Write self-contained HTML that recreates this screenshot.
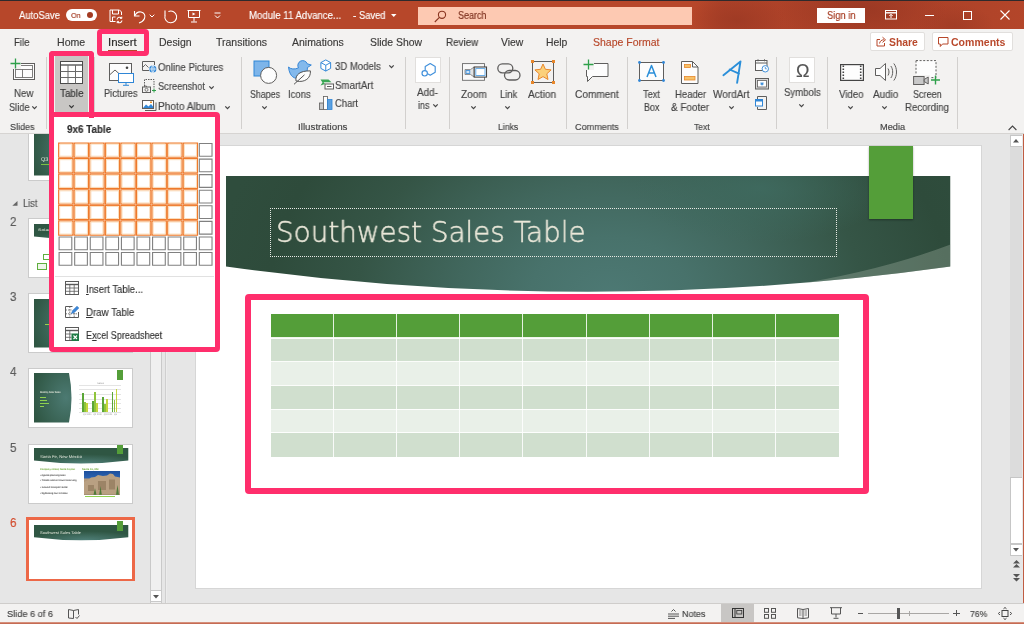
<!DOCTYPE html>
<html><head><meta charset="utf-8"><title>PowerPoint - Insert Table</title>
<style>
html,body{margin:0;padding:0}
body{width:1024px;height:624px;position:relative;overflow:hidden;background:#e6e6e6;font-family:"Liberation Sans",sans-serif;}
.t{position:absolute;white-space:nowrap;line-height:1;transform-origin:0 0;display:block;will-change:transform;-webkit-text-stroke:.15px}
.a{position:absolute}
svg{position:absolute;overflow:visible}
.sep{position:absolute;width:1px;background:#d2d0ce;top:57px;height:72px}
.pk{position:absolute;border:5.8px solid #ff2e6c;border-radius:4px;box-sizing:border-box}
</style></head>
<body>
<div class="a" style="left:150px;top:133.500px;width:12px;height:470px;background:#f0f0f0;border-left:1px solid #c9c9c9;border-right:1px solid #c9c9c9;box-sizing:border-box"></div>
<div class="a" style="left:150px;top:590px;width:12px;height:12px;background:#fff;border:1px solid #c9c9c9;box-sizing:border-box"></div>
<svg style="left:153px;top:594.500px" width="6" height="4" viewBox="0 0 6 4"><path d="M0 0h6L3 3.500z" fill="#555"/></svg>
<div class="a" style="left:165.200px;top:133.500px;width:1px;height:470px;background:#cfcfcf"></div>
<div class="a" style="left:166.200px;top:133.500px;width:1px;height:470px;background:#ececec"></div>
<span class="t" style="left:10.00px;top:119.00px;font-size:12px;color:#5a5a5a;transform:scaleX(0.9570);">1</span>
<div class="a" style="left:28.300px;top:120.7px;width:105.200px;height:60px;background:#fff;border:1px solid #cbcbcb;box-sizing:border-box"></div>
<svg style="left:33.7px;top:126px" width="38" height="49.5" viewBox="0 0 38 49.5"><defs><radialGradient id="tp1" cx=".85" cy=".5" r=".9"><stop offset="0" stop-color="#4c7a72"/><stop offset="1" stop-color="#2f5643"/></radialGradient></defs><path d="M0 0H35Q40 24.75 35 49.5H0z" fill="url(#tp1)"/></svg>
<span class="t" style="left:40.50px;top:158.00px;font-size:5.5px;color:#e4e8dc;transform:scaleX(0.9532);text-rendering:geometricPrecision;-webkit-text-stroke:0;">Q3</span>
<div class="a" style="left:40.500px;top:164px;width:9px;height:.8px;background:#7bc043"></div>
<svg style="left:11.500px;top:200.500px" width="6" height="5" viewBox="0 0 6 5"><path d="M5.500 0v4.800H.3z" fill="#666"/></svg>
<span class="t" style="left:23.00px;top:199.00px;font-size:10.4px;color:#555;transform:scaleX(0.8966);">List</span>
<span class="t" style="left:10.00px;top:216.00px;font-size:12px;color:#5a5a5a;transform:scaleX(0.9570);">2</span>
<div class="a" style="left:28.300px;top:217.8px;width:105.200px;height:60px;background:#fff;border:1px solid #cbcbcb;box-sizing:border-box"></div>
<svg style="left:33.5px;top:223.5px" width="94.3" height="16.5" viewBox="0 0 94.3 16.5"><defs><radialGradient id="tb217" cx=".55" cy="1" r=".6" gradientTransform="scale(1 1)"><stop offset="0" stop-color="#4f7f78"/><stop offset="1" stop-color="#2f5643"/></radialGradient></defs><path d="M0 0H94.3V12.5Q47.15 18.5 0 12.5z" fill="url(#tb217)"/></svg>
<span class="t" style="left:38.00px;top:229.00px;font-size:3.5px;color:#e4e8dc;transform:scaleX(1.4685);text-rendering:geometricPrecision;-webkit-text-stroke:0;">Solar</span>
<div class="a" style="left:42.500px;top:253.500px;width:9px;height:6.500px;border:1px solid #5fae3e;background:#fff;box-sizing:border-box"></div>
<div class="a" style="left:37px;top:262.500px;width:10px;height:7px;border:1px solid #5fae3e;background:#eef6ea;box-sizing:border-box"></div>
<span class="t" style="left:10.00px;top:291.00px;font-size:12px;color:#5a5a5a;transform:scaleX(0.9570);">3</span>
<div class="a" style="left:28.300px;top:292.8px;width:105.200px;height:60px;background:#fff;border:1px solid #cbcbcb;box-sizing:border-box"></div>
<svg style="left:33.7px;top:298.5px" width="38" height="48.5" viewBox="0 0 38 48.5"><defs><radialGradient id="tp3" cx=".85" cy=".5" r=".9"><stop offset="0" stop-color="#4c7a72"/><stop offset="1" stop-color="#2f5643"/></radialGradient></defs><path d="M0 0H35Q40 24.25 35 48.5H0z" fill="url(#tp3)"/></svg>
<div class="a" style="left:45px;top:323.500px;width:5px;height:.8px;background:#9ad04c"></div>
<span class="t" style="left:10.00px;top:366.00px;font-size:12px;color:#5a5a5a;transform:scaleX(0.9570);">4</span>
<div class="a" style="left:28.300px;top:367.8px;width:105.200px;height:60px;background:#fff;border:1px solid #cbcbcb;box-sizing:border-box"></div>
<svg style="left:33.7px;top:373.3px" width="38" height="49.5" viewBox="0 0 38 49.5"><defs><radialGradient id="tp4" cx=".85" cy=".5" r=".9"><stop offset="0" stop-color="#4c7a72"/><stop offset="1" stop-color="#2f5643"/></radialGradient></defs><path d="M0 0H35Q40 24.75 35 49.5H0z" fill="url(#tp4)"/></svg>
<span class="t" style="left:39.70px;top:392.00px;font-size:2.6px;color:#e4e8dc;font-weight:700;transform:scaleX(0.8314);text-rendering:geometricPrecision;-webkit-text-stroke:0;">Monthly Solar Sales</span>
<div class="a" style="left:39.700px;top:396.8px;width:6px;height:.7px;background:#8fd14f"></div>
<div class="a" style="left:39.700px;top:399.8px;width:7.5px;height:.7px;background:#8fd14f"></div>
<div class="a" style="left:39.700px;top:402.6px;width:9.5px;height:.7px;background:#8fd14f"></div>
<div class="a" style="left:39.700px;top:405.6px;width:4px;height:.7px;background:#8fd14f"></div>
<div class="a" style="left:117.4px;top:369.5px;width:5.8px;height:10px;background:#549e39"></div>
<div class="a" style="left:79px;top:384.8px;width:41.500px;height:.5px;background:#e4e4e4"></div>
<div class="a" style="left:79px;top:389.40000000000003px;width:41.500px;height:.5px;background:#e4e4e4"></div>
<div class="a" style="left:79px;top:394.0px;width:41.500px;height:.5px;background:#e4e4e4"></div>
<div class="a" style="left:79px;top:398.6px;width:41.500px;height:.5px;background:#e4e4e4"></div>
<div class="a" style="left:79px;top:403.2px;width:41.500px;height:.5px;background:#e4e4e4"></div>
<div class="a" style="left:79px;top:407.8px;width:41.500px;height:.5px;background:#e4e4e4"></div>
<div class="a" style="left:79px;top:412.40000000000003px;width:41.500px;height:.5px;background:#e4e4e4"></div>
<span class="t" style="left:97.00px;top:383.00px;font-size:2.4px;color:#999;transform:scaleX(1.1697);text-rendering:geometricPrecision;-webkit-text-stroke:0;">Sales</span>
<div class="a" style="left:82px;top:392.5px;width:1.800px;height:19.5px;background:#5aa637"></div>
<div class="a" style="left:84px;top:401.5px;width:1.800px;height:10.5px;background:#8fc43c"></div>
<div class="a" style="left:85.8px;top:403.0px;width:1.800px;height:9px;background:#c4d63c"></div>
<div class="a" style="left:91.8px;top:400.5px;width:1.800px;height:11.5px;background:#5aa637"></div>
<div class="a" style="left:93.8px;top:391.5px;width:1.800px;height:20.5px;background:#8fc43c"></div>
<div class="a" style="left:95.8px;top:403.2px;width:1.800px;height:8.8px;background:#c4d63c"></div>
<div class="a" style="left:102px;top:396.5px;width:1.800px;height:15.5px;background:#5aa637"></div>
<div class="a" style="left:104px;top:404.0px;width:1.800px;height:8px;background:#8fc43c"></div>
<div class="a" style="left:105.8px;top:398.5px;width:1.800px;height:13.5px;background:#c4d63c"></div>
<div class="a" style="left:111.7px;top:391.5px;width:1.800px;height:20.5px;background:#5aa637"></div>
<div class="a" style="left:113.7px;top:400.2px;width:1.800px;height:11.8px;background:#8fc43c"></div>
<div class="a" style="left:115.6px;top:389.0px;width:1.800px;height:23px;background:#c4d63c"></div>
<span class="t" style="left:83.00px;top:414.00px;font-size:2.2px;color:#999;transform:scaleX(1.0126);text-rendering:geometricPrecision;-webkit-text-stroke:0;">Q1 2020 &nbsp; Q2 2020 &nbsp; Q3 2020 &nbsp; Q4</span>
<span class="t" style="left:10.00px;top:442.00px;font-size:12px;color:#5a5a5a;transform:scaleX(0.9570);">5</span>
<div class="a" style="left:28.300px;top:443.6px;width:105.200px;height:60px;background:#fff;border:1px solid #cbcbcb;box-sizing:border-box"></div>
<svg style="left:33.5px;top:448.40000000000003px" width="94.3" height="16.5" viewBox="0 0 94.3 16.5"><defs><radialGradient id="tb443" cx=".55" cy="1" r=".6" gradientTransform="scale(1 1)"><stop offset="0" stop-color="#4f7f78"/><stop offset="1" stop-color="#2f5643"/></radialGradient></defs><path d="M0 0H94.3V12.5Q47.15 18.5 0 12.5z" fill="url(#tb443)"/></svg>
<div class="a" style="left:117.4px;top:444.8px;width:5.8px;height:9.7px;background:#549e39"></div>
<span class="t" style="left:39.90px;top:455.00px;font-size:4px;color:#e4e8dc;transform:scaleX(1.0435);text-rendering:geometricPrecision;-webkit-text-stroke:0;">Santa Fe, New Mexico</span>
<span class="t" style="left:40.00px;top:469.00px;font-size:2.6px;color:#6aa632;font-weight:700;transform:scaleX(0.8992);text-rendering:geometricPrecision;-webkit-text-stroke:0;">Company retreat, Santa Fe plan</span>
<span class="t" style="left:40.00px;top:475.00px;font-size:2.6px;color:#444;font-weight:700;transform:scaleX(0.8518);text-rendering:geometricPrecision;-webkit-text-stroke:0;">• Agenda planning tasks</span>
<span class="t" style="left:40.00px;top:480.00px;font-size:2.6px;color:#444;font-weight:700;transform:scaleX(0.9172);text-rendering:geometricPrecision;-webkit-text-stroke:0;">• Tickets and air travel reserving</span>
<span class="t" style="left:40.00px;top:487.00px;font-size:2.6px;color:#444;font-weight:700;transform:scaleX(0.8902);text-rendering:geometricPrecision;-webkit-text-stroke:0;">• Ground transport rental</span>
<span class="t" style="left:40.00px;top:493.00px;font-size:2.6px;color:#444;font-weight:700;transform:scaleX(0.8107);text-rendering:geometricPrecision;-webkit-text-stroke:0;">• Sightseeing tour list ideas</span>
<span class="t" style="left:82.00px;top:469.00px;font-size:2.6px;color:#6aa632;font-weight:700;transform:scaleX(1.0125);text-rendering:geometricPrecision;-webkit-text-stroke:0;">Santa Fe, NM</span>
<div class="a" style="left:83.800px;top:471.3px;width:36.200px;height:23.800px;background:linear-gradient(180deg,#1d4f9c 0%,#2b62b0 28%,#b49a7c 34%,#a58a6c 62%,#8a7358 82%,#6b6a44 100%)"></div>
<svg style="left:83.800px;top:471.3px" width="36.200" height="23.800" viewBox="0 0 36.200 23.800"><path d="M0 11l4-2 3-2.500 4-.5 3-2 5 1 4-.5 3-2 3 .5 2 2.500 5 1V23.800H0z" fill="#b9a082"/><path d="M4 14h6v6H4zM14 10h8v9h-8zM25 8.500h6v10h-6z" fill="#9c8466"/><path d="M11 17l1.500 6.800h-3zM16.500 15l1.300 8.800h-2.600zM33.500 14l1.500 9.800h-3z" fill="#4f7a3a"/></svg>
<div class="a" style="left:84.500px;top:495.90000000000003px;width:30px;height:.7px;background:#8fd14f"></div>
<span class="t" style="left:10.00px;top:517.00px;font-size:12px;color:#d2492a;transform:scaleX(0.9570);">6</span>
<div class="a" style="left:26px;top:517.3000000000001px;width:109px;height:64px;background:#ed6847"></div>
<div class="a" style="left:28.700px;top:520.0px;width:103.600px;height:58.600px;background:#fff"></div>
<svg style="left:33.5px;top:524.6px" width="94.3" height="16.3" viewBox="0 0 94.3 16.3"><defs><radialGradient id="tb518" cx=".55" cy="1" r=".6" gradientTransform="scale(1 1)"><stop offset="0" stop-color="#4f7f78"/><stop offset="1" stop-color="#2f5643"/></radialGradient></defs><path d="M0 0H94.3V12.3Q47.15 18.3 0 12.3z" fill="url(#tb518)"/></svg>
<div class="a" style="left:117.3px;top:520.5px;width:5.8px;height:10px;background:#549e39"></div>
<span class="t" style="left:40.00px;top:532.00px;font-size:3.8px;color:#e4e8dc;transform:scaleX(1.0688);text-rendering:geometricPrecision;-webkit-text-stroke:0;">Southwest Sales Table</span>
<div class="a" style="left:195px;top:145px;width:787.200px;height:443.800px;background:#fff;border:1px solid #d6d6d6;box-sizing:border-box"></div>
<svg style="left:226px;top:176px" width="724.500" height="117" viewBox="0 0 724.500 117">
<defs>
<radialGradient id="bg1" gradientUnits="userSpaceOnUse" cx="384" cy="121" r="400" gradientTransform="translate(0 30.250) scale(1 .75)"><stop offset="0" stop-color="#4d7974"/><stop offset=".2" stop-color="#48726b"/><stop offset=".38" stop-color="#41675d"/><stop offset=".63" stop-color="#355546"/><stop offset=".85" stop-color="#2e4b3b"/><stop offset="1" stop-color="#2f4d3d"/></radialGradient>
<radialGradient id="bg2" gradientUnits="userSpaceOnUse" cx="534" cy="12" r="130" gradientTransform="translate(0 7) scale(1 .42)"><stop offset="0" stop-color="#3f6b60" stop-opacity=".85"/><stop offset="1" stop-color="#3f6b60" stop-opacity="0"/></radialGradient>
<clipPath id="bc"><path d="M0 0H724.500V90.500Q362 141 0 90.500z"/></clipPath>
</defs>
<g clip-path="url(#bc)">
<rect width="724.500" height="117" fill="url(#bg1)"/>
<rect width="724.500" height="117" fill="url(#bg2)"/>
<path d="M724.500 68.500Q655 95 560 110L724.500 117z" fill="#a9b8aa" fill-opacity=".33"/>
</g>
</svg>
<div class="a" style="left:868.500px;top:146px;width:44.300px;height:73.200px;background:#549e39;box-shadow:0 1px 2px rgba(0,0,0,.35)"></div>
<div class="a" style="left:269.500px;top:208px;width:567.500px;height:48.500px;border:1px dotted #e6eae4;box-sizing:border-box"></div>
<span class="t" style="left:276.00px;top:218.00px;font-size:28.8px;color:#ebe8da;font-weight:200;transform:scaleX(0.9651);font-family:'DejaVu Sans Light','DejaVu Sans','Liberation Sans',sans-serif;-webkit-text-stroke:.5px">Southwest Sales Table</span>
<div class="a" style="left:270.5px;top:314.00px;width:568.08px;height:23.75px;background:#549e39"></div>
<div class="a" style="left:270.5px;top:337.75px;width:568.08px;height:23.75px;background:#d0dfce"></div>
<div class="a" style="left:270.5px;top:361.50px;width:568.08px;height:23.75px;background:#e9f0e8"></div>
<div class="a" style="left:270.5px;top:385.25px;width:568.08px;height:23.75px;background:#d0dfce"></div>
<div class="a" style="left:270.5px;top:409.00px;width:568.08px;height:23.75px;background:#e9f0e8"></div>
<div class="a" style="left:270.5px;top:432.75px;width:568.08px;height:23.75px;background:#d0dfce"></div>
<div class="a" style="left:333.12px;top:314px;width:1px;height:142.5px;background:rgba(255,255,255,.85)"></div>
<div class="a" style="left:396.24px;top:314px;width:1px;height:142.5px;background:rgba(255,255,255,.85)"></div>
<div class="a" style="left:459.36px;top:314px;width:1px;height:142.5px;background:rgba(255,255,255,.85)"></div>
<div class="a" style="left:522.48px;top:314px;width:1px;height:142.5px;background:rgba(255,255,255,.85)"></div>
<div class="a" style="left:585.60px;top:314px;width:1px;height:142.5px;background:rgba(255,255,255,.85)"></div>
<div class="a" style="left:648.72px;top:314px;width:1px;height:142.5px;background:rgba(255,255,255,.85)"></div>
<div class="a" style="left:711.84px;top:314px;width:1px;height:142.5px;background:rgba(255,255,255,.85)"></div>
<div class="a" style="left:774.96px;top:314px;width:1px;height:142.5px;background:rgba(255,255,255,.85)"></div>
<div class="a" style="left:270.5px;top:337.25px;width:568.08px;height:1.6px;background:rgba(255,255,255,.9)"></div>
<div class="a" style="left:270.5px;top:361.00px;width:568.08px;height:1px;background:rgba(255,255,255,.9)"></div>
<div class="a" style="left:270.5px;top:384.75px;width:568.08px;height:1px;background:rgba(255,255,255,.9)"></div>
<div class="a" style="left:270.5px;top:408.50px;width:568.08px;height:1px;background:rgba(255,255,255,.9)"></div>
<div class="a" style="left:270.5px;top:432.25px;width:568.08px;height:1px;background:rgba(255,255,255,.9)"></div>
<div class="pk" style="left:244.500px;top:293.500px;width:624px;height:200.500px;border-width:6px"></div>
<div class="a" style="left:1010px;top:133.500px;width:12px;height:470px;background:#dcdcdc"></div>
<div class="a" style="left:1010px;top:134.500px;width:12.500px;height:12.500px;background:#fff;border:1px solid #c6c6c6;box-sizing:border-box"></div>
<svg style="left:1013.300px;top:139px" width="6" height="4" viewBox="0 0 6 4"><path d="M0 3.500h6L3 0z" fill="#555"/></svg>
<div class="a" style="left:1010px;top:477px;width:12.500px;height:66.500px;background:#fff;border:1px solid #c6c6c6;box-sizing:border-box"></div>
<div class="a" style="left:1010px;top:543.500px;width:12.500px;height:12px;background:#fff;border:1px solid #c6c6c6;box-sizing:border-box"></div>
<svg style="left:1013.300px;top:548px" width="6" height="4" viewBox="0 0 6 4"><path d="M0 0h6L3 3.500z" fill="#555"/></svg>
<div class="a" style="left:1010px;top:555.500px;width:12.500px;height:47px;background:#e6e6e6"></div>
<svg style="left:1012.800px;top:560px" width="7" height="8" viewBox="0 0 7 8"><path d="M0 3.500h7L3.500 0zM0 7.500h7L3.500 4z" fill="#555"/></svg>
<svg style="left:1012.800px;top:573.500px" width="7" height="8" viewBox="0 0 7 8"><path d="M0 0h7L3.500 3.500zM0 4h7L3.500 7.500z" fill="#555"/></svg>
<div class="a" style="left:1022px;top:133.500px;width:1px;height:470px;background:#e6e8e8"></div><div class="a" style="left:1023px;top:29px;width:1px;height:595px;background:#c05c42"></div>
<div class="a" style="left:0;top:0;width:1024px;height:29px;background:#b7472a"></div>
<div class="a" style="left:692px;top:0;width:332px;height:29px;background:radial-gradient(ellipse 48px 26px at 45px 20px,rgba(158,58,36,.9),rgba(158,58,36,0) 100%),radial-gradient(ellipse 85px 34px at 170px 10px,rgba(154,56,35,.95),rgba(154,56,35,0) 100%),radial-gradient(ellipse 40px 22px at 262px 26px,rgba(158,58,36,.7),rgba(158,58,36,0) 100%),linear-gradient(90deg,rgba(170,64,40,0),rgba(170,64,40,.75) 30px,rgba(170,64,40,.75) 250px,rgba(176,68,41,.5) 332px)"></div>
<div class="a" style="left:0;top:0;width:1024px;height:1px;background:#2e2a2c"></div>
<span class="t" style="left:18.80px;top:11.00px;font-size:10px;color:#ffffff;transform:scaleX(0.9452);">AutoSave</span>
<div class="a" style="left:65.5px;top:8.5px;width:31.5px;height:12.5px;border-radius:7px;background:#fff"></div>
<span class="t" style="left:70.60px;top:12.00px;font-size:8px;color:#a33a22;transform:scaleX(0.8902);">On</span>
<div class="a" style="left:87px;top:11.8px;width:6px;height:6px;border-radius:3px;background:#a33a22"></div>
<svg style="left:109px;top:9px" width="14" height="14" viewBox="0 0 14 14" fill="none" stroke="#fff" stroke-width="1"><path d="M6.5 12.5H1V1h9.5L12.5 3V6"/><path d="M3.5 1v4h6V1"/><path d="M3.5 12.5V8h3"/><path d="M8 10.5a2.6 2.6 0 0 1 4.6-1.3M13 11.5a2.6 2.6 0 0 1-4.6 1.3" stroke-width="1.1"/><path d="M12.8 7.6v1.8h-1.8M8.2 14.2v-1.8H10" stroke-width=".9"/></svg>
<svg style="left:132.5px;top:8.5px" width="15" height="15" viewBox="0 0 15 15" fill="none" stroke="#fff" stroke-width="1.1"><path d="M1.5 2v5h5"/><path d="M1.8 6.8C3 4 5.5 2.6 8 3c3 .5 4.800 3.500 3.500 6.500C10.600 11.500 8.500 13.300 6 14"/></svg>
<svg style="left:149px;top:14px" width="6" height="4" viewBox="0 0 6 4" fill="none" stroke="#fff" stroke-width="1"><path d="M.7.7l2.300 2.300L5.300.7"/></svg>
<svg style="left:163px;top:8.500px" width="15" height="15" viewBox="0 0 15 15" fill="none" stroke="#fff" stroke-width="1.100"><path d="M2 1.500V6.400"/><path d="M2.100 6.200A5.900 5.900 0 1 0 5.400 2.500" transform="rotate(0)"/></svg>
<svg style="left:187px;top:9px" width="14" height="14" viewBox="0 0 14 14" fill="none" stroke="#fff" stroke-width="1"><path d="M.5 1.500h13M1.500 1.500v7h11v-7M7 8.500v4M4 13h6"/><path d="M5.500 3.500v3l3-1.500z" fill="#fff" stroke="none"/></svg>
<svg style="left:214px;top:12px" width="7" height="7" viewBox="0 0 7 7" fill="none" stroke="#fff" stroke-width="1"><path d="M.5 1h6M1 3.500l2.500 2.500L6 3.500"/></svg>
<span class="t" style="left:249.40px;top:11.00px;font-size:10px;color:#ffffff;transform:scaleX(0.9640);">Module 11 Advance...</span>
<span class="t" style="left:352.50px;top:11.00px;font-size:10px;color:#ffffff;">-</span>
<span class="t" style="left:359.00px;top:11.00px;font-size:10px;color:#ffffff;transform:scaleX(0.9344);">Saved</span>
<svg style="left:390.500px;top:14px" width="6" height="4" viewBox="0 0 6 4"><path d="M0 0h5.500L2.750 3z" fill="#fff"/></svg>
<div class="a" style="left:418px;top:7px;width:274px;height:17.500px;background:#fdc9b2"></div>
<svg style="left:433.500px;top:9.500px" width="13" height="13" viewBox="0 0 13 13" fill="none" stroke="#8a3520" stroke-width="1.100"><circle cx="8" cy="4.800" r="3.600"/><path d="M5.400 7.400L.8 12"/></svg>
<span class="t" style="left:458.40px;top:11.00px;font-size:10px;color:#7c2f1d;transform:scaleX(0.8994);">Search</span>
<div class="a" style="left:817px;top:7.500px;width:47.500px;height:15px;background:#fff"></div>
<span class="t" style="left:826.50px;top:11.00px;font-size:10.4px;color:#a5391f;transform:scaleX(0.8968);">Sign in</span>
<svg style="left:885px;top:9.500px" width="12" height="10" viewBox="0 0 12 10" fill="none" stroke="#fff" stroke-width="1"><rect x=".5" y=".5" width="11" height="8.500"/><path d="M.5 2.800h11" stroke-width="1.400"/><path d="M6 8V4.500M4.300 6L6 4.300 7.700 6"/></svg>
<div class="a" style="left:924.500px;top:14.500px;width:9px;height:1px;background:#fff"></div>
<div class="a" style="left:962.500px;top:10.500px;width:7.500px;height:7.500px;border:1px solid #fff;box-sizing:content-box"></div>
<svg style="left:999.500px;top:10px" width="10" height="10" viewBox="0 0 10 10" stroke="#fff" stroke-width="1.100"><path d="M.5.5l9 9M9.500.5l-9 9"/></svg>
<div class="a" style="left:0;top:29px;width:1024px;height:103.5px;background:#f3f2f1"></div>
<div class="a" style="left:0;top:132.5px;width:1024px;height:1px;background:#d6d4d2"></div>
<span class="t" style="left:14.00px;top:38.00px;font-size:10.4px;color:#3b3a39;transform:scaleX(0.9254);">File</span>
<span class="t" style="left:56.60px;top:38.00px;font-size:10.4px;color:#3b3a39;transform:scaleX(1.0174);">Home</span>
<span class="t" style="left:108.00px;top:38.00px;font-size:10.4px;color:#2b2a29;transform:scaleX(1.1038);">Insert</span>
<span class="t" style="left:159.00px;top:38.00px;font-size:10.4px;color:#3b3a39;transform:scaleX(1.0074);">Design</span>
<span class="t" style="left:215.60px;top:38.00px;font-size:10.4px;color:#3b3a39;transform:scaleX(1.0112);">Transitions</span>
<span class="t" style="left:292.40px;top:38.00px;font-size:10.4px;color:#3b3a39;transform:scaleX(1.0077);">Animations</span>
<span class="t" style="left:370.00px;top:38.00px;font-size:10.4px;color:#3b3a39;">Slide Show</span>
<span class="t" style="left:445.50px;top:38.00px;font-size:10.4px;color:#3b3a39;transform:scaleX(0.9478);">Review</span>
<span class="t" style="left:500.90px;top:38.00px;font-size:10.4px;color:#3b3a39;">View</span>
<span class="t" style="left:546.30px;top:38.00px;font-size:10.4px;color:#3b3a39;">Help</span>
<span class="t" style="left:592.60px;top:38.00px;font-size:10.4px;color:#b7472a;transform:scaleX(1.0100);">Shape Format</span>
<div class="a" style="left:108px;top:49.500px;width:29px;height:1.600px;background:#b7472a"></div>
<div class="a" style="left:869.500px;top:32px;width:55px;height:19px;background:#fff;border:1px solid #e1dfdd;box-sizing:border-box;border-radius:2px"></div>
<svg style="left:875.500px;top:36px" width="11" height="11" viewBox="0 0 11 11" fill="none" stroke="#b7472a" stroke-width="1"><path d="M4 3.500H1v6.500h7.500V7"/><path d="M3.500 7.500C4 5 5.500 3.800 8 3.800M6.500 1.200L9.500 3.800 6.500 6.400"/></svg>
<span class="t" style="left:889.00px;top:38.00px;font-size:10.4px;color:#b9492c;font-weight:700;transform:scaleX(0.9865);-webkit-text-stroke:0;">Share</span>
<div class="a" style="left:931.500px;top:32px;width:81.500px;height:19px;background:#fff;border:1px solid #e1dfdd;box-sizing:border-box;border-radius:2px"></div>
<svg style="left:938px;top:36.500px" width="11" height="11" viewBox="0 0 11 11" fill="none" stroke="#b7472a" stroke-width="1"><path d="M.5.500h9.500v6.500H4.500L2.300 9.500V7H.5z"/></svg>
<span class="t" style="left:951.00px;top:38.00px;font-size:10.4px;color:#b9492c;font-weight:700;transform:scaleX(1.0148);-webkit-text-stroke:0;">Comments</span>
<div class="sep" style="left:46.4px"></div>
<div class="sep" style="left:94.3px"></div>
<div class="sep" style="left:240.8px"></div>
<div class="sep" style="left:405px"></div>
<div class="sep" style="left:449px"></div>
<div class="sep" style="left:565.5px"></div>
<div class="sep" style="left:627.2px"></div>
<div class="sep" style="left:775.5px"></div>
<div class="sep" style="left:827px"></div>
<div class="sep" style="left:956.8px"></div>
<span class="t" style="left:10.30px;top:123.00px;font-size:9.200000000000001px;color:#444444;transform:scaleX(0.9788);">Slides</span>
<span class="t" style="left:298.00px;top:123.00px;font-size:9.200000000000001px;color:#444444;transform:scaleX(1.0652);">Illustrations</span>
<span class="t" style="left:497.50px;top:123.00px;font-size:9.200000000000001px;color:#444444;transform:scaleX(0.9462);">Links</span>
<span class="t" style="left:574.60px;top:123.00px;font-size:9.200000000000001px;color:#444444;transform:scaleX(0.9860);">Comments</span>
<span class="t" style="left:693.60px;top:123.00px;font-size:9.200000000000001px;color:#444444;transform:scaleX(0.9312);">Text</span>
<span class="t" style="left:880.00px;top:123.00px;font-size:9.200000000000001px;color:#444444;transform:scaleX(1.0067);">Media</span>
<svg style="left:1008px;top:124.500px" width="9" height="6" viewBox="0 0 9 6" fill="none" stroke="#444" stroke-width="1.100"><path d="M.6 5l3.900-3.900L8.400 5"/></svg>
<svg style="left:10px;top:58px" width="26" height="23" viewBox="0 0 26 23" fill="none"><rect x="3.500" y="5.500" width="21" height="16" fill="#fdfdfd" stroke="#5f5e5d"/><rect x="5.500" y="7.500" width="17" height="12" stroke="#5f5e5d" stroke-width=".8"/><path d="M5.500 11.500h17M12.500 11.500v8" stroke="#5f5e5d" stroke-width=".8"/><rect x="0" y="0" width="11" height="11" fill="#f3f2f1"/><path d="M5.500.5v10M.5 5.500h10" stroke="#2ea04a" stroke-width="1.300"/></svg>
<span class="t" style="left:14.20px;top:89.00px;font-size:10.3px;color:#444444;transform:scaleX(0.9365);">New</span>
<span class="t" style="left:9.30px;top:103.00px;font-size:10.3px;color:#444444;transform:scaleX(0.8950);">Slide</span>
<svg style="left:32.0px;top:105.5px" width="5" height="3.500" viewBox="0 0 5 3.500" fill="none" stroke="#444" stroke-width="1.250"><path d="M.3.400l2.200 2.200L4.700.400"/></svg>
<div class="a" style="left:54.500px;top:56px;width:33px;height:55.500px;background:#c8c6c4"></div>
<svg style="left:60px;top:60.500px" width="23" height="23" viewBox="0 0 23 23" fill="none" stroke="#4a4a4a"><rect x=".5" y=".5" width="22" height="22" fill="#fff"/><path d="M.5 4h22" stroke-width="1.300"/><path d="M.5 10.500h22M.5 16.500h22M8 4v18.500M15.500 4v18.500" stroke="#6a6a6a" stroke-width="1"/></svg>
<span class="t" style="left:59.50px;top:89.00px;font-size:10.3px;color:#333;transform:scaleX(0.9543);">Table</span>
<svg style="left:68.5px;top:105.2px" width="5" height="3.500" viewBox="0 0 5 3.500" fill="none" stroke="#333" stroke-width="1.250"><path d="M.3.400l2.200 2.200L4.700.400"/></svg>
<svg style="left:108.500px;top:62.500px" width="26" height="23" viewBox="0 0 26 23" fill="none"><rect x=".5" y=".5" width="22" height="17" fill="#fdfdfd" stroke="#5f5e5d"/><path d="M.5 12l5.500-5 5 4.500" stroke="#5f5e5d"/><circle cx="18" cy="4.800" r="1.300" fill="#444"/><rect x="9.500" y="10.500" width="15" height="9" fill="#fff" stroke="#2f86d6" stroke-width="1"/><path d="M17 19.500v2.500M14 22.300h6" stroke="#2f86d6"/></svg>
<span class="t" style="left:103.60px;top:89.00px;font-size:10.3px;color:#444444;transform:scaleX(0.9031);">Pictures</span>
<svg style="left:142px;top:61px" width="15" height="12" viewBox="0 0 15 12" fill="none"><path d="M7 9.500H.5V.5h12V4" stroke="#5f5e5d"/><path d="M.5 6.500l3-3 3 3" stroke="#5f5e5d" stroke-width=".9"/><circle cx="10.800" cy="8" r="3.600" fill="#2f86d6"/><path d="M7.200 8h7.200M10.800 4.400v7.200M10.800 4.400c-2 2-2 5.200 0 7.200M10.800 4.400c2 2 2 5.200 0 7.200" stroke="#fff" stroke-width=".6"/></svg>
<span class="t" style="left:158.30px;top:63.00px;font-size:10.3px;color:#444444;transform:scaleX(0.9337);">Online Pictures</span>
<svg style="left:142px;top:79px" width="15" height="14" viewBox="0 0 15 14" fill="none"><path d="M2.500 7V.5h9.500v9" stroke="#5f5e5d" stroke-dasharray="1.500 1"/><rect x=".5" y="8" width="8" height="5.500" fill="#f3f2f1" stroke="#5f5e5d"/><circle cx="4.500" cy="10.800" r="1.500" stroke="#5f5e5d" stroke-width=".8"/><path d="M2.500 8V7h2v1" stroke="#5f5e5d" stroke-width=".8"/><path d="M12 9.500v4M10 11.500h4" stroke="#2ea04a" stroke-width="1"/></svg>
<span class="t" style="left:158.30px;top:82.00px;font-size:10.3px;color:#444444;transform:scaleX(0.9022);">Screenshot</span>
<svg style="left:208.5px;top:86.0px" width="5" height="3.500" viewBox="0 0 5 3.500" fill="none" stroke="#444" stroke-width="1.250"><path d="M.3.400l2.200 2.200L4.700.400"/></svg>
<svg style="left:142px;top:100px" width="15" height="11" viewBox="0 0 15 11" fill="none"><path d="M3 10.500h11V2.500" stroke="#5f5e5d"/><rect x=".5" y=".5" width="11" height="8" fill="#fff" stroke="#5f5e5d"/><path d="M1 8l3-3.500 2.500 2L9 4l2 2.500V8z" fill="#2f86d6"/><rect x="8" y="1.500" width="2" height="1.500" fill="#e8912d"/></svg>
<span class="t" style="left:158.30px;top:102.00px;font-size:10.3px;color:#444444;transform:scaleX(0.9847);">Photo Album</span>
<svg style="left:224.5px;top:105.5px" width="5" height="3.500" viewBox="0 0 5 3.500" fill="none" stroke="#444" stroke-width="1.250"><path d="M.3.400l2.200 2.200L4.700.400"/></svg>
<svg style="left:253px;top:60px" width="25" height="25" viewBox="0 0 25 25" fill="none"><rect x="1" y="1" width="15" height="15" fill="#7db5ea" stroke="#2f86d6" stroke-width="1"/><circle cx="15.600" cy="15.400" r="8" fill="#fdfdfd" stroke="#5f5e5d" stroke-width="1"/></svg>
<span class="t" style="left:249.70px;top:90.00px;font-size:10.3px;color:#444444;transform:scaleX(0.8615);">Shapes</span>
<svg style="left:262.2px;top:105.5px" width="5" height="3.500" viewBox="0 0 5 3.500" fill="none" stroke="#444" stroke-width="1.250"><path d="M.3.400l2.200 2.200L4.700.400"/></svg>
<svg style="left:288px;top:60px" width="24" height="26" viewBox="0 0 24 26" fill="none"><path d="M.5 7C2.500 9.200 6.500 9.600 10.460 7.950A4.900 4.900 0 1 1 19.300 3.800L23.300 5 19.400 7.600C19.800 12 17 16.500 12 18 7 19.500 1.500 17 .5 7z" fill="#83b9ec" stroke="#2a7fd4" stroke-width=".9" stroke-linejoin="round"/><path d="M8 21C7 15 12 10.500 22.400 10.900 23 18 17 23 8 21z" fill="#fdfdfd" stroke="#555" stroke-width="1"/><path d="M6 24.300L16.500 14.800" stroke="#555" stroke-width="1"/></svg>
<span class="t" style="left:288.10px;top:90.00px;font-size:10.3px;color:#444444;transform:scaleX(0.9218);">Icons</span>
<svg style="left:319.800px;top:58.800px" width="11.500" height="13" viewBox="0 0 13 14" fill="none" stroke="#2f86d6" stroke-width="1.100" stroke-linejoin="round"><path d="M6.500.7L12 3.700v6.600l-5.500 3-5.500-3V3.700z" fill="#fff"/><path d="M1 3.700l5.500 3 5.500-3M6.500 6.700v6.600"/></svg>
<span class="t" style="left:334.50px;top:62.00px;font-size:10.3px;color:#444444;transform:scaleX(0.9305);">3D Models</span>
<svg style="left:389.1px;top:65.0px" width="5" height="3.500" viewBox="0 0 5 3.500" fill="none" stroke="#444" stroke-width="1.250"><path d="M.3.400l2.200 2.200L4.700.400"/></svg>
<svg style="left:319.500px;top:79px" width="14" height="11" viewBox="0 0 14 11" fill="none"><path d="M.5.500h8l3 2.800H3.500L5 5l-4.500 1.500L2.500 3.500z" fill="#3aa655"/><rect x="5" y="5" width="8.500" height="5" fill="#fdfdfd" stroke="#5f5e5d"/><path d="M7 7.500h4.500" stroke="#5f5e5d"/></svg>
<span class="t" style="left:334.50px;top:81.00px;font-size:10.3px;color:#444444;transform:scaleX(0.9428);">SmartArt</span>
<svg style="left:319px;top:96px" width="14" height="14" viewBox="0 0 14 14" fill="none"><rect x=".5" y="7" width="4" height="6.500" fill="#c8c8c8" stroke="#5f5e5d" stroke-width=".8"/><rect x="4.500" y=".5" width="4" height="13" fill="#fdfdfd" stroke="#5f5e5d" stroke-width=".8"/><rect x="8.500" y="3.500" width="4.500" height="10" fill="#5aa0e0" stroke="#2f86d6" stroke-width=".8"/></svg>
<span class="t" style="left:335.00px;top:99.00px;font-size:10.3px;color:#444444;transform:scaleX(0.9132);">Chart</span>
<div class="a" style="left:415px;top:57px;width:26px;height:26px;background:#fff;border:1px solid #e1dfdd;box-sizing:border-box"></div>
<svg style="left:420.500px;top:62.500px" width="16" height="15" viewBox="0 0 16 15" fill="none" stroke="#3f8fdb" stroke-width="1.150" stroke-linejoin="round" stroke-linecap="round"><path d="M4.200 6.800V3.500L9.200.6l5 2.900v5.800l-5 2.900L7.200 11.100"/><circle cx="3.700" cy="10.300" r="2.700"/></svg>
<span class="t" style="left:417.00px;top:88.00px;font-size:10.3px;color:#444444;transform:scaleX(0.9648);">Add-</span>
<span class="t" style="left:418.00px;top:101.00px;font-size:10.3px;color:#444444;transform:scaleX(0.8731);">ins</span>
<svg style="left:433.0px;top:104.0px" width="5" height="3.500" viewBox="0 0 5 3.500" fill="none" stroke="#444" stroke-width="1.250"><path d="M.3.400l2.200 2.200L4.700.400"/></svg>
<svg style="left:462px;top:62.500px" width="25" height="18" viewBox="0 0 25 18" fill="none"><rect x=".5" y=".6" width="22" height="16.700" fill="#f9f9f9" stroke="#6b6b6b" stroke-width=".9"/><path d="M3 6.500H8.500L12.200 4V14L8.500 11.500H3z" fill="#e4e4e4" stroke="#7a7a7a" stroke-width=".8"/><rect x="4" y="7.600" width="3.800" height="2.800" fill="#cfe4f7" stroke="#2f86d6" stroke-width=".8"/><rect x="12.200" y="4" width="12.300" height="10.100" fill="#fff" stroke="#444" stroke-width="1.100"/><rect x="13.800" y="5.600" width="9.200" height="6.900" fill="#fff" stroke="#5aa5e6" stroke-width=".9"/></svg>
<span class="t" style="left:461.00px;top:90.00px;font-size:10.3px;color:#444444;transform:scaleX(0.9799);">Zoom</span>
<svg style="left:470.7px;top:105.5px" width="5" height="3.500" viewBox="0 0 5 3.500" fill="none" stroke="#444" stroke-width="1.250"><path d="M.3.400l2.200 2.200L4.700.400"/></svg>
<svg style="left:497px;top:63px" width="24" height="18" viewBox="0 0 24 18" fill="none" stroke="#5f5e5d" stroke-width="1.300"><rect x=".8" y=".8" width="15" height="9" rx="4.500"/><rect x="7.500" y="7.500" width="15.500" height="9.500" rx="4.700"/></svg>
<span class="t" style="left:500.00px;top:90.00px;font-size:10.3px;color:#444444;transform:scaleX(0.9105);">Link</span>
<svg style="left:505.3px;top:105.5px" width="5" height="3.500" viewBox="0 0 5 3.500" fill="none" stroke="#444" stroke-width="1.250"><path d="M.3.400l2.200 2.200L4.700.400"/></svg>
<svg style="left:530.500px;top:60px" width="24" height="24" viewBox="0 0 24 24" fill="none"><rect x="1.500" y="1.500" width="21" height="21" stroke="#5f5e5d" stroke-width="1"/><path d="M12 4l2.400 5.300 5.700.6-4.300 3.900 1.200 5.700L12 16.600 7 19.500l1.200-5.700-4.300-3.900 5.700-.6z" fill="#fbd07a" stroke="#e8872a" stroke-width="1"/><g fill="#e8872a"><rect x="0" y="0" width="3" height="3"/><rect x="21" y="0" width="3" height="3"/><rect x="0" y="21" width="3" height="3"/><rect x="21" y="21" width="3" height="3"/></g></svg>
<span class="t" style="left:528.20px;top:90.00px;font-size:10.3px;color:#444444;transform:scaleX(0.9782);">Action</span>
<svg style="left:583px;top:58.500px" width="26" height="24" viewBox="0 0 26 24" fill="none"><path d="M3.500 4.500h21.500v13H9.500L4.500 22.500V17.500H3.500z" fill="#fdfdfd" stroke="#5f5e5d" stroke-width="1"/><rect x="0" y="0" width="11" height="11" fill="#f3f2f1"/><path d="M5.500.5v10M.5 5.500h10" stroke="#2ea04a" stroke-width="1.300"/></svg>
<span class="t" style="left:574.60px;top:90.00px;font-size:10.3px;color:#444444;transform:scaleX(0.9812);">Comment</span>
<svg style="left:638px;top:61px" width="27" height="21" viewBox="0 0 27 21" fill="none"><rect x="1.500" y="1.500" width="24" height="18" fill="#fdfdfd" stroke="#5f5e5d" stroke-width="1"/><g fill="#2f86d6"><circle cx="1.500" cy="1.500" r="1.400"/><circle cx="25.500" cy="1.500" r="1.400"/><circle cx="1.500" cy="19.500" r="1.400"/><circle cx="25.500" cy="19.500" r="1.400"/></g><path d="M9 16L13.500 4.500 18 16M10.600 12h5.800" stroke="#2b8fd9" stroke-width="1.500" stroke-linejoin="round"/></svg>
<span class="t" style="left:643.40px;top:90.00px;font-size:10.3px;color:#444444;transform:scaleX(0.8999);">Text</span>
<span class="t" style="left:644.00px;top:103.00px;font-size:10.3px;color:#444444;transform:scaleX(0.8732);">Box</span>
<svg style="left:681px;top:60.500px" width="18" height="23" viewBox="0 0 18 23" fill="none"><path d="M.5.500h11l5.500 5.500v16.500H.5z" fill="#fdfdfd" stroke="#5f5e5d" stroke-width="1"/><path d="M11.500.5v5.500h5.500" stroke="#5f5e5d" stroke-width="1"/><rect x="3.500" y="3.500" width="6" height="3" fill="#f6c26a" stroke="#e8872a" stroke-width=".8"/><rect x="3.500" y="15.500" width="10.500" height="3.500" fill="#f6c26a" stroke="#e8872a" stroke-width=".8"/></svg>
<span class="t" style="left:674.50px;top:90.00px;font-size:10.3px;color:#444444;transform:scaleX(0.9236);">Header</span>
<span class="t" style="left:670.60px;top:103.00px;font-size:10.3px;color:#444444;transform:scaleX(0.9646);">&amp; Footer</span>
<svg style="left:722px;top:60px" width="21" height="24" viewBox="0 0 21 24" fill="none" stroke="#2b8fd9" stroke-width="1.900" stroke-linecap="round" stroke-linejoin="round"><path d="M1.400 15.200L18.500 1.400L15.100 22.800M7.600 9.500L17 13.700"/></svg>
<span class="t" style="left:713.00px;top:90.00px;font-size:10.3px;color:#444444;transform:scaleX(0.9713);">WordArt</span>
<svg style="left:728.7px;top:105.5px" width="5" height="3.500" viewBox="0 0 5 3.500" fill="none" stroke="#444" stroke-width="1.250"><path d="M.3.400l2.200 2.200L4.700.400"/></svg>
<svg style="left:754.500px;top:58.500px" width="14" height="14" viewBox="0 0 14 14" fill="none"><rect x=".5" y="1.500" width="11.500" height="10" fill="#fdfdfd" stroke="#5f5e5d"/><path d="M.5 4h11.500M3 .3v2M9.500 .3v2" stroke="#5f5e5d"/><circle cx="10.300" cy="9.800" r="3.200" fill="#fff" stroke="#2f86d6" stroke-width=".9"/><path d="M10.300 8v1.800h1.500" stroke="#2f86d6" stroke-width=".8"/></svg>
<svg style="left:754.500px;top:78px" width="14" height="12" viewBox="0 0 14 12" fill="none"><rect x=".5" y=".5" width="13" height="10.500" fill="#d8d8d8" stroke="#5f5e5d"/><rect x="2.500" y="2.500" width="9" height="6.500" fill="#fff" stroke="#5f5e5d" stroke-width=".8"/><path d="M5.300 5.800h3.400M7 4.100v3.400M5.800 4.600l2.400 2.400M8.200 4.600L5.800 7" stroke="#2f86d6" stroke-width=".8"/></svg>
<svg style="left:754.500px;top:96px" width="13" height="14" viewBox="0 0 13 14" fill="none"><path d="M2.500 3V.5h9v13h-9V11" stroke="#5f5e5d"/><rect x=".5" y="3.500" width="7" height="6.500" fill="#fdfdfd" stroke="#2f86d6"/><path d="M.5 4.500h7" stroke="#2f86d6" stroke-width="2"/></svg>
<div class="a" style="left:789px;top:57px;width:26px;height:26px;background:#fff;border:1px solid #e1dfdd;box-sizing:border-box"></div>
<span class="t" style="left:795.50px;top:63.00px;font-size:17.5px;color:#555;transform:scaleX(1.0310);">Ω</span>
<span class="t" style="left:783.60px;top:88.00px;font-size:10.3px;color:#444444;transform:scaleX(0.9320);">Symbols</span>
<svg style="left:799.0px;top:103.5px" width="5" height="3.500" viewBox="0 0 5 3.500" fill="none" stroke="#444" stroke-width="1.250"><path d="M.3.400l2.200 2.200L4.700.400"/></svg>
<svg style="left:839.500px;top:63.500px" width="24" height="17" viewBox="0 0 24 17" fill="none"><rect x=".6" y=".6" width="22.800" height="15.800" fill="#fdfdfd" stroke="#444" stroke-width="1.200"/><path d="M3.300 1.500v14M20.700 1.500v14" stroke="#444" stroke-width="1.600" stroke-dasharray="1.600 1.400"/></svg>
<span class="t" style="left:839.00px;top:90.00px;font-size:10.3px;color:#444444;transform:scaleX(0.9367);">Video</span>
<svg style="left:848.1px;top:105.5px" width="5" height="3.500" viewBox="0 0 5 3.500" fill="none" stroke="#444" stroke-width="1.250"><path d="M.3.400l2.200 2.200L4.700.400"/></svg>
<svg style="left:874.500px;top:61.500px" width="23" height="20" viewBox="0 0 23 20" fill="none" stroke="#5f5e5d" stroke-width="1"><path d="M.5 6.500h4.500L10.500 1.500v17L5 13.500H.5z" fill="#fdfdfd"/><path d="M13 6.500c1.300 1.800 1.300 5.200 0 7M15.800 4c2.500 3 2.500 9 0 12M18.800 1.500c3.600 4.500 3.600 12.500 0 17"/></svg>
<span class="t" style="left:873.00px;top:90.00px;font-size:10.3px;color:#444444;transform:scaleX(0.9680);">Audio</span>
<svg style="left:882.1px;top:105.5px" width="5" height="3.500" viewBox="0 0 5 3.500" fill="none" stroke="#444" stroke-width="1.250"><path d="M.3.400l2.200 2.200L4.700.400"/></svg>
<svg style="left:913px;top:60px" width="28" height="26" viewBox="0 0 28 26" fill="none"><rect x="3" y=".6" width="20" height="17" stroke="#5f5e5d" stroke-dasharray="2 1.600" fill="#fdfdfd"/><rect x="0" y="15" width="17" height="11" fill="#f3f2f1"/><rect x=".6" y="16.500" width="10.500" height="8" fill="#c8c8c8" stroke="#5f5e5d"/><path d="M11.200 19.500l4-2.500v7l-4-2.500z" fill="#c8c8c8" stroke="#5f5e5d"/><path d="M22.500 15.500v9M18 20h9" stroke="#2ea04a" stroke-width="1.400"/></svg>
<span class="t" style="left:912.60px;top:90.00px;font-size:10.3px;color:#444444;transform:scaleX(0.8762);">Screen</span>
<span class="t" style="left:904.70px;top:103.00px;font-size:10.3px;color:#444444;transform:scaleX(0.9353);">Recording</span>
<div class="a" style="left:0;top:603.300px;width:1024px;height:20.700px;background:#f3f2f1;border-top:1px solid #cfcdcb;box-sizing:border-box"></div>
<div class="a" style="left:0;top:622px;width:1024px;height:2px;background:linear-gradient(180deg,#dda08e,#bd5a41)"></div>
<span class="t" style="left:6.80px;top:609.00px;font-size:9.4px;color:#444444;transform:scaleX(0.9804);">Slide 6 of 6</span>
<svg style="left:68px;top:608.500px" width="12" height="11" viewBox="0 0 12 11" fill="none" stroke="#555" stroke-width="1"><path d="M5.500 1.500v8M5.500 1.500L.5.500v8.500l5 .5M5.500 1.500l5-1v5"/><path d="M7.500 8l1.500 1.500 2.500-3"/></svg>
<svg style="left:667.500px;top:608.500px" width="11" height="10" viewBox="0 0 11 10" fill="none" stroke="#555" stroke-width="1"><path d="M3.500 2.500L5.500.5l2 2M0 5h11M0 7.200h11M0 9.400h7"/></svg>
<span class="t" style="left:682.00px;top:609.00px;font-size:9.4px;color:#444444;transform:scaleX(0.9592);">Notes</span>
<div class="a" style="left:721px;top:603.500px;width:32.500px;height:18.500px;background:#c8c6c4"></div>
<svg style="left:731.500px;top:608px" width="12" height="10" viewBox="0 0 12 10" fill="none" stroke="#333" stroke-width="1"><rect x=".5" y=".5" width="11" height="9"/><path d="M3 .5v9"/><rect x="4.800" y="2.500" width="5" height="3.500" stroke-width=".8"/></svg>
<svg style="left:764px;top:607.500px" width="12" height="11" viewBox="0 0 12 11" fill="none" stroke="#555" stroke-width="1"><rect x=".5" y=".5" width="4" height="3.800"/><rect x="7.500" y=".5" width="4" height="3.800"/><rect x=".5" y="6.500" width="4" height="3.800"/><rect x="7.500" y="6.500" width="4" height="3.800"/></svg>
<svg style="left:796.500px;top:607.500px" width="12" height="11" viewBox="0 0 12 11" fill="none" stroke="#555" stroke-width="1"><path d="M6 1.500v8.500M6 1.500L.5.500v9.300L6 10.500l5.500-.7V.5z"/><path d="M2 3h2.500M2 5h2.500M2 7h2.500M7.500 3H10M7.500 5H10M7.500 7H10" stroke-width=".7"/></svg>
<svg style="left:829.500px;top:607px" width="12" height="12" viewBox="0 0 12 12" fill="none" stroke="#555" stroke-width="1"><path d="M0 .7h12M1.500 .7v6.300h9V.7M6 7v3.500M3.500 11.300h5"/></svg>
<div class="a" style="left:857.500px;top:612.700px;width:5px;height:1px;background:#555"></div>
<div class="a" style="left:868px;top:612.700px;width:81px;height:1px;background:#a9a7a5"></div>
<div class="a" style="left:908.800px;top:610.500px;width:1px;height:5.500px;background:#a9a7a5"></div>
<div class="a" style="left:897px;top:608px;width:3px;height:10.500px;background:#555"></div>
<div class="a" style="left:953px;top:612.700px;width:6.500px;height:1px;background:#555"></div><div class="a" style="left:955.800px;top:609.700px;width:1px;height:6.800px;background:#555"></div>
<span class="t" style="left:969.60px;top:609.00px;font-size:9.4px;color:#444444;transform:scaleX(0.9166);">76%</span>
<svg style="left:997.500px;top:606.500px" width="14" height="13" viewBox="0 0 14 13" fill="none" stroke="#444" stroke-width="1"><rect x="4" y="3.500" width="6" height="6"/><path d="M5.500 1.800L7 .5l1.500 1.300M5.500 11.200L7 12.500l1.500-1.300M1.800 5L.5 6.500 1.800 8M12.200 5l1.300 1.500L12.200 8"/></svg>
<div class="a" style="left:52px;top:115px;width:165px;height:233px;background:#fff"></div>
<span class="t" style="left:67.30px;top:125.00px;font-size:10.3px;color:#2b2b2b;font-weight:700;transform:scaleX(0.9573);">9x6 Table</span>
<svg style="left:0;top:0" width="230" height="280" viewBox="0 0 230 280" fill="#fff"><path d="M58.65 143.05h14.200v14.200h-14.200zM74.23 143.05h14.200v14.200h-14.200zM89.81 143.05h14.200v14.200h-14.200zM105.39 143.05h14.200v14.200h-14.200zM120.97 143.05h14.200v14.200h-14.200zM136.55 143.05h14.200v14.200h-14.200zM152.13 143.05h14.200v14.200h-14.200zM167.71 143.05h14.200v14.200h-14.200zM183.29 143.05h14.200v14.200h-14.200zM58.65 158.63h14.200v14.200h-14.200zM74.23 158.63h14.200v14.200h-14.200zM89.81 158.63h14.200v14.200h-14.200zM105.39 158.63h14.200v14.200h-14.200zM120.97 158.63h14.200v14.200h-14.200zM136.55 158.63h14.200v14.200h-14.200zM152.13 158.63h14.200v14.200h-14.200zM167.71 158.63h14.200v14.200h-14.200zM183.29 158.63h14.200v14.200h-14.200zM58.65 174.21h14.200v14.200h-14.200zM74.23 174.21h14.200v14.200h-14.200zM89.81 174.21h14.200v14.200h-14.200zM105.39 174.21h14.200v14.200h-14.200zM120.97 174.21h14.200v14.200h-14.200zM136.55 174.21h14.200v14.200h-14.200zM152.13 174.21h14.200v14.200h-14.200zM167.71 174.21h14.200v14.200h-14.200zM183.29 174.21h14.200v14.200h-14.200zM58.65 189.79h14.200v14.200h-14.200zM74.23 189.79h14.200v14.200h-14.200zM89.81 189.79h14.200v14.200h-14.200zM105.39 189.79h14.200v14.200h-14.200zM120.97 189.79h14.200v14.200h-14.200zM136.55 189.79h14.200v14.200h-14.200zM152.13 189.79h14.200v14.200h-14.200zM167.71 189.79h14.200v14.200h-14.200zM183.29 189.79h14.200v14.200h-14.200zM58.65 205.37h14.200v14.200h-14.200zM74.23 205.37h14.200v14.200h-14.200zM89.81 205.37h14.200v14.200h-14.200zM105.39 205.37h14.200v14.200h-14.200zM120.97 205.37h14.200v14.200h-14.200zM136.55 205.37h14.200v14.200h-14.200zM152.13 205.37h14.200v14.200h-14.200zM167.71 205.37h14.200v14.200h-14.200zM183.29 205.37h14.200v14.200h-14.200zM58.65 220.95h14.200v14.200h-14.200zM74.23 220.95h14.200v14.200h-14.200zM89.81 220.95h14.200v14.200h-14.200zM105.39 220.95h14.200v14.200h-14.200zM120.97 220.95h14.200v14.200h-14.200zM136.55 220.95h14.200v14.200h-14.200zM152.13 220.95h14.200v14.200h-14.200zM167.71 220.95h14.200v14.200h-14.200zM183.29 220.95h14.200v14.200h-14.200z" stroke="#ee7a2c" stroke-width="1.150"/><path d="M59.70 144.10h12.100v12.100h-12.100zM75.28 144.10h12.100v12.100h-12.100zM90.86 144.10h12.100v12.100h-12.100zM106.44 144.10h12.100v12.100h-12.100zM122.02 144.10h12.100v12.100h-12.100zM137.60 144.10h12.100v12.100h-12.100zM153.18 144.10h12.100v12.100h-12.100zM168.76 144.10h12.100v12.100h-12.100zM184.34 144.10h12.100v12.100h-12.100zM59.70 159.68h12.100v12.100h-12.100zM75.28 159.68h12.100v12.100h-12.100zM90.86 159.68h12.100v12.100h-12.100zM106.44 159.68h12.100v12.100h-12.100zM122.02 159.68h12.100v12.100h-12.100zM137.60 159.68h12.100v12.100h-12.100zM153.18 159.68h12.100v12.100h-12.100zM168.76 159.68h12.100v12.100h-12.100zM184.34 159.68h12.100v12.100h-12.100zM59.70 175.26h12.100v12.100h-12.100zM75.28 175.26h12.100v12.100h-12.100zM90.86 175.26h12.100v12.100h-12.100zM106.44 175.26h12.100v12.100h-12.100zM122.02 175.26h12.100v12.100h-12.100zM137.60 175.26h12.100v12.100h-12.100zM153.18 175.26h12.100v12.100h-12.100zM168.76 175.26h12.100v12.100h-12.100zM184.34 175.26h12.100v12.100h-12.100zM59.70 190.84h12.100v12.100h-12.100zM75.28 190.84h12.100v12.100h-12.100zM90.86 190.84h12.100v12.100h-12.100zM106.44 190.84h12.100v12.100h-12.100zM122.02 190.84h12.100v12.100h-12.100zM137.60 190.84h12.100v12.100h-12.100zM153.18 190.84h12.100v12.100h-12.100zM168.76 190.84h12.100v12.100h-12.100zM184.34 190.84h12.100v12.100h-12.100zM59.70 206.42h12.100v12.100h-12.100zM75.28 206.42h12.100v12.100h-12.100zM90.86 206.42h12.100v12.100h-12.100zM106.44 206.42h12.100v12.100h-12.100zM122.02 206.42h12.100v12.100h-12.100zM137.60 206.42h12.100v12.100h-12.100zM153.18 206.42h12.100v12.100h-12.100zM168.76 206.42h12.100v12.100h-12.100zM184.34 206.42h12.100v12.100h-12.100zM59.70 222.00h12.100v12.100h-12.100zM75.28 222.00h12.100v12.100h-12.100zM90.86 222.00h12.100v12.100h-12.100zM106.44 222.00h12.100v12.100h-12.100zM122.02 222.00h12.100v12.100h-12.100zM137.60 222.00h12.100v12.100h-12.100zM153.18 222.00h12.100v12.100h-12.100zM168.76 222.00h12.100v12.100h-12.100zM184.34 222.00h12.100v12.100h-12.100z" stroke="#fbd9b4" stroke-width=".9" fill="none"/><path d="M199.32 143.50h12.700v12.700h-12.700zM199.32 159.08h12.700v12.700h-12.700zM199.32 174.66h12.700v12.700h-12.700zM199.32 190.24h12.700v12.700h-12.700zM199.32 205.82h12.700v12.700h-12.700zM199.32 221.40h12.700v12.700h-12.700zM59.10 236.98h12.700v12.700h-12.700zM74.68 236.98h12.700v12.700h-12.700zM90.26 236.98h12.700v12.700h-12.700zM105.84 236.98h12.700v12.700h-12.700zM121.42 236.98h12.700v12.700h-12.700zM137.00 236.98h12.700v12.700h-12.700zM152.58 236.98h12.700v12.700h-12.700zM168.16 236.98h12.700v12.700h-12.700zM183.74 236.98h12.700v12.700h-12.700zM199.32 236.98h12.700v12.700h-12.700zM59.10 252.56h12.700v12.700h-12.700zM74.68 252.56h12.700v12.700h-12.700zM90.26 252.56h12.700v12.700h-12.700zM105.84 252.56h12.700v12.700h-12.700zM121.42 252.56h12.700v12.700h-12.700zM137.00 252.56h12.700v12.700h-12.700zM152.58 252.56h12.700v12.700h-12.700zM168.16 252.56h12.700v12.700h-12.700zM183.74 252.56h12.700v12.700h-12.700zM199.32 252.56h12.700v12.700h-12.700z" stroke="#808080" stroke-width="1.100"/></svg>
<div class="a" style="left:55px;top:276.300px;width:159px;height:1px;background:#e1e1e1"></div>
<svg style="left:65px;top:281px" width="14" height="14" viewBox="0 0 14 14" fill="none" stroke="#5a5a5a" stroke-width="1"><rect x=".5" y=".5" width="13" height="13" fill="#fff"/><path d="M.5 3.500h13" stroke-width="1.400"/><path d="M.5 7h13M.5 10.300h13M4.800 3.500v10M9.200 3.500v10" stroke-width=".8"/></svg>
<span class="t" style="left:86.00px;top:285.00px;font-size:10.3px;color:#333;transform:scaleX(0.9247);"><u>I</u>nsert Table...</span>
<svg style="left:65px;top:304px" width="14" height="14" viewBox="0 0 14 14" fill="none" stroke="#5a5a5a" stroke-width="1"><path d="M.5 2.500h7M.5 2.500v11h13V8" /><path d="M.5 6h6M.5 9.800h13M4.800 2.500v11M9.200 9v4.500" stroke-width=".8" stroke-dasharray="1.500 1"/><path d="M6.500 9.500l1-2.800L12 2.200l1.800 1.800L9.300 8.500z" fill="#3b87d8" stroke="#2f74c0" stroke-width=".6"/></svg>
<span class="t" style="left:86.00px;top:308.00px;font-size:10.3px;color:#333;transform:scaleX(0.9430);"><u>D</u>raw Table</span>
<svg style="left:65px;top:327px" width="14" height="14" viewBox="0 0 14 14" fill="none" stroke="#5a5a5a" stroke-width="1"><rect x=".5" y=".5" width="13" height="13" fill="#fff"/><path d="M.5 3.500h13" stroke-width="1.400"/><path d="M.5 7h6M.5 10.300h6M4.800 3.500v10" stroke-width=".8"/><rect x="6.500" y="6.500" width="7.500" height="7.500" fill="#1e7a45" stroke="none"/><path d="M8.500 8.500l3.500 3.500M12 8.500l-3.500 3.500" stroke="#fff" stroke-width="1.100"/></svg>
<span class="t" style="left:86.00px;top:331.00px;font-size:10.3px;color:#333;transform:scaleX(0.8814);">E<u>x</u>cel Spreadsheet</span>
<div class="pk" style="left:49px;top:112px;width:171px;height:239.500px"></div>
<div class="pk" style="left:49px;top:50.500px;width:44.500px;height:67px;border-bottom:none;border-radius:4px 4px 0 0"></div>
<div class="pk" style="left:97px;top:28.500px;width:51.500px;height:27px;border-width:5.400px"></div>
</body></html>
